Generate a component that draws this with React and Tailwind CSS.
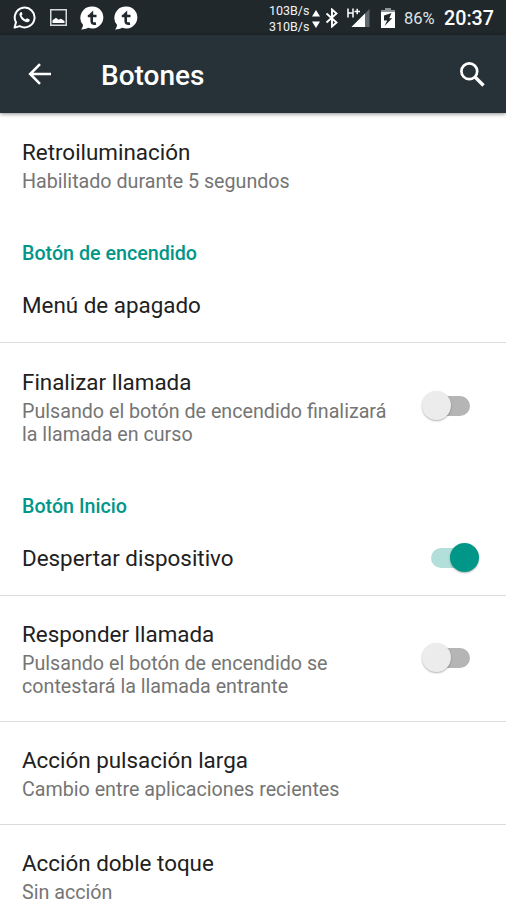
const font = "font-['Roboto','Liberation_Sans',sans-serif]";

function WhatsApp() {
  return (
    <svg className="h-[23px] w-[23px] shrink-0" viewBox="0 0 23 23" fill="none">
      <path d="M1.6 21.6 3 16.3A9.9 9.9 0 1 1 6.8 20.1Z" stroke="#fff" strokeWidth="2" strokeLinejoin="round" />
      <path d="M7.700 6.200c-1 .6-1.500 1.600-1.200 2.800.8 3.600 3.600 6.400 7.200 7.200 1.400.3 2.600-.4 3-1.600.2-.7 0-1-.5-1.300l-1.700-.9c-.5-.2-.8-.1-1.100.3l-.7.8c-2-.8-3.400-2.200-4.200-4l.7-.8c.3-.4.3-.7.100-1.100l-.7-1.500c-.2-.3-.5-.2-.9.100Z" fill="#fff" />
    </svg>
  );
}

function Picture() {
  return (
    <svg className="h-[17px] w-[17px] shrink-0" viewBox="0 0 17 17" fill="none">
      <rect x=".75" y=".75" width="15.500" height="15.500" stroke="#d5dadc" strokeWidth="1.500" />
      <path d="M2.500 14V11.300L6 8.700 8.500 10.800 11 9.700 14.500 12V14Z" fill="#fff" />
    </svg>
  );
}

function TBubble() {
  return (
    <svg className="h-6 w-6 shrink-0" viewBox="0 0 24 24">
      <path d="M12.500.5a11 11 0 1 1-4.300 21.200C6 22.800 3.400 23.500 1 23.400c1.300-1.200 2-2.800 2-4.600A11.200 11.200 0 0 1 12.500.5Z" fill="#fff" />
      <path d="M11.700 10V15.300c0 2 1.300 2.700 4.300 2.200M7.800 10H16.500" stroke="#20292d" strokeWidth="2.600" fill="none" />
      <path d="M9.500 8 13.200 4.500V9.500H9Z" fill="#20292d" />
    </svg>
  );
}

function StatusBar() {
  return (
    <div className="flex h-[35px] items-center bg-[#20282c] pl-[13px] pr-[11px] text-white">
      <WhatsApp />
      <span className="w-[14px]" />
      <Picture />
      <span className="w-[13px]" />
      <TBubble />
      <span className="w-[10px]" />
      <TBubble />
      <div className="ml-auto flex items-center">
        <div className="w-[42px] whitespace-nowrap pt-[2px] text-[12.500px] leading-4 text-[#f0f3f4]">
          <div>103B/s</div>
          <div>310B/s</div>
        </div>
        <svg className="ml-px mt-[3px] h-5 w-2 shrink-0" viewBox="0 0 8 20" fill="#fff">
          <path d="M4 1 8 7.500H0ZM4 19 0 12.500H8Z" />
        </svg>
        <svg className="ml-[5px] h-5 w-[14px] shrink-0" viewBox="0 0 14 20" fill="none" stroke="#fff" strokeWidth="1.900">
          <path d="M1.500 5.500 11.500 14.500 7 18.500V1.500L11.500 5.500 1.500 14.500" />
        </svg>
        <svg className="ml-[8px] h-5 w-[23px] shrink-0" viewBox="0 0 23 20">
          <path d="M22.500 1V19H4.500Z" fill="#5f686d" />
          <path d="M18 5.500V19H4.500Z" fill="#fff" />
          <path d="M1 .5V9.500M6 .5V9.500M1 5H6M7.500 3.500H13M10.200 .8V6.200" stroke="#fff" strokeWidth="1.500" fill="none" />
        </svg>
        <svg className="ml-[11px] h-5 w-[14px] shrink-0" viewBox="0 0 14 20">
          <path d="M4 0H10V2H14V6H0V2H4Z" fill="#8d9498" />
          <path d="M0 4H14V20H0Z" fill="#fff" />
          <path d="M10.500 5 3 7.500V12.500H6.200L3.500 18 11.200 10.300H8.300Z" fill="#20282c" />
        </svg>
        <span className="ml-[9px] w-[31px] whitespace-nowrap pt-[2px] text-[16.500px] leading-5 text-[#dfe3e5]">86%</span>
        <span className="ml-[9px] w-[51px] whitespace-nowrap pt-[2px] text-[19.700px] font-medium leading-5">20:37</span>
      </div>
    </div>
  );
}

function AppBar() {
  return (
    <header className="relative flex h-[78px] items-center bg-[#263238] pl-[28px] pr-[21px] text-white shadow-[0_1px_4px_rgba(0,0,0,0.45)]">
      <svg className="h-[22px] w-[23px] shrink-0" viewBox="0 0 23 22" fill="none" stroke="#fff" strokeWidth="2.600">
        <path d="M23 11H2.500M12 1.200 2.200 11 12 20.800" />
      </svg>
      <h1 className="ml-[50px] pt-[4px] text-[28px] font-medium leading-8">Botones</h1>
      <svg className="ml-auto h-[25px] w-[25px] shrink-0" viewBox="0 0 25 25" fill="none" stroke="#fff">
        <circle cx="9.300" cy="9.300" r="7.900" strokeWidth="2.700" />
        <path d="M15 15 23.500 23.500" strokeWidth="3.300" />
      </svg>
    </header>
  );
}

function Toggle({ on = false }) {
  return on ? (
    <div className="relative mb-[2px] mr-[27px] h-[29px] w-[48px] shrink-0">
      <div className="mt-[4px] h-5 w-10 rounded-full bg-[#b2dfd9]" />
      <div className="absolute -top-px right-0 h-[29px] w-[29px] rounded-full bg-[#009688] shadow-[0_1px_2px_rgba(0,0,0,0.3)]" />
    </div>
  ) : (
    <div className="relative mb-px mr-[36px] h-[29px] w-[48px] shrink-0">
      <div className="ml-auto mt-[4px] h-5 w-10 rounded-full bg-[#b5b5b5]" />
      <div className="absolute -top-px left-0 h-[29px] w-[29px] rounded-full bg-[#ececec] shadow-[0_1px_2px_rgba(0,0,0,0.3)]" />
    </div>
  );
}

function Row({ title, lines, toggle, divider = false, last = false }) {
  const padding = !lines ? "pb-[24px] pt-[22px]" : last ? "pt-[25px]" : divider ? "pb-[23px] pt-[25px]" : "pb-[24px] pt-[25px]";
  return (
    <div className={"flex items-center justify-between pl-[22px] " + (divider ? "border-b border-[#dcdcdc]" : "")}>
      <div className={padding}>
        <div className="whitespace-nowrap text-[22.400px] leading-[26px] text-[#212121]">{title}</div>
        {lines && (
          <div className={"whitespace-nowrap text-[19.680px] text-[#757575] " + (last ? "mt-[9px] leading-[15px]" : "mt-[5px] leading-[23px]")}>
            {lines.map((line) => (
              <div key={line}>{line}</div>
            ))}
          </div>
        )}
      </div>
      {toggle && <Toggle on={toggle === "on"} />}
    </div>
  );
}

function Category({ children }) {
  return <h2 className="h-[53px] pl-[22px] pt-[25px] text-[19.680px] font-medium leading-[23px] text-[#009688]">{children}</h2>;
}

export default function App() {
  return (
    <div className={"h-[900px] w-[506px] overflow-hidden bg-white " + font}>
      <StatusBar />
      <AppBar />
      <main className="pt-px">
        <Row title="Retroiluminación" lines={["Habilitado durante 5 segundos"]} />
        <Category>Botón de encendido</Category>
        <Row title="Menú de apagado" divider />
        <div className="pt-px">
          <Row
            title="Finalizar llamada"
            lines={["Pulsando el botón de encendido finalizará", "la llamada en curso"]}
            toggle="off"
          />
        </div>
        <Category>Botón Inicio</Category>
        <Row title="Despertar dispositivo" toggle="on" divider />
        <Row
          title="Responder llamada"
          lines={["Pulsando el botón de encendido se", "contestará la llamada entrante"]}
          toggle="off"
          divider
        />
        <Row title="Acción pulsación larga" lines={["Cambio entre aplicaciones recientes"]} divider />
        <Row title="Acción doble toque" lines={["Sin acción"]} last />
      </main>
    </div>
  );
}
